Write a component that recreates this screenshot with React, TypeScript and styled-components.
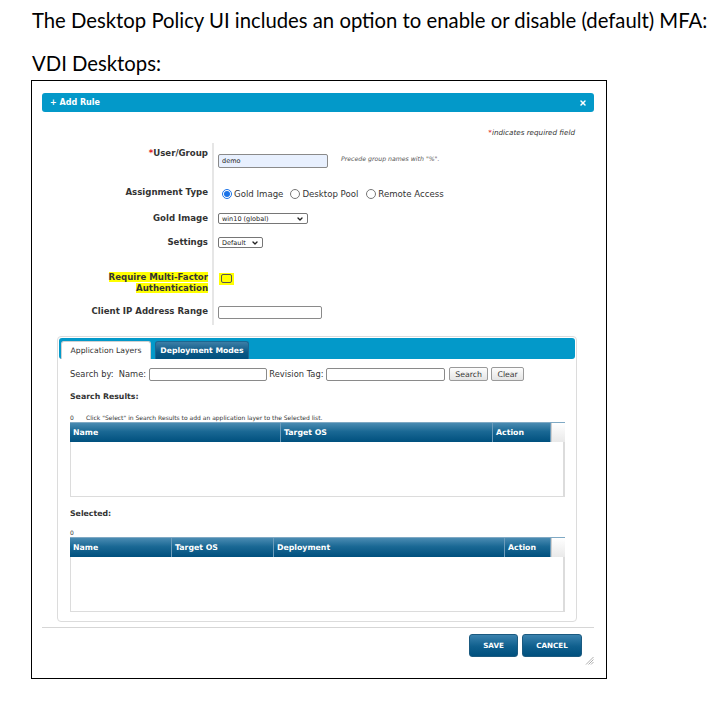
import React from "react";
import styled, { createGlobalStyle } from "styled-components";
import { ChevronDown, X } from "lucide-react";

const UI = `"DejaVu Sans", Verdana, sans-serif`;

const Global = createGlobalStyle`
  html, body { margin: 0; padding: 0; background: #fff; }
  body { width: 720px; height: 705px; overflow: hidden; }
  * { box-sizing: border-box; }
`;

const Page = styled.div`
  padding-top: 7px;
`;

const Intro = styled.p<{ $mt: number }>`
  margin: ${(p) => p.$mt}px 0 0 32px;
  font-family: Lato, "Open Sans", sans-serif;
  font-size: 20.3px;
  line-height: 26px;
  color: #000;
  white-space: nowrap;
`;

const Frame = styled.div`
  margin: 4px 0 0 31px;
  width: 576px;
  height: 599px;
  border: 1px solid #000;
  padding: 12px 12px 0 10px;
  display: flex;
  flex-direction: column;
  font-family: ${UI};
  color: #333;
`;

const TitleBar = styled.div`
  height: 19px;
  background: #0399c9;
  border-radius: 3px;
  padding: 0 7px 0 8px;
  display: flex;
  align-items: center;
  justify-content: space-between;
  color: #fff;
  font-weight: bold;
  font-size: 8px;
`;

const RequiredNote = styled.div`
  margin-top: 16px;
  padding-right: 19px;
  text-align: right;
  font-style: italic;
  font-size: 7.2px;
  line-height: 9px;
  color: #333;
`;

const Req = styled.span`
  color: #e02020;
`;

const Form = styled.div`
  margin-top: 6px;
  display: flex;
  flex-direction: column;
`;

const Row = styled.div<{ $h: number }>`
  display: grid;
  grid-template-columns: 170px 1fr;
  height: ${(p) => p.$h}px;
`;

const Label = styled.div<{ $top: number }>`
  padding: ${(p) => p.$top}px 4px 0 0;
  text-align: right;
  font-weight: bold;
  font-size: 8.6px;
  line-height: 11px;
  color: #333;
`;

const Highlight = styled.span`
  background: #ffff00;
  color: #333;
`;

const Field = styled.div<{ $top: number }>`
  border-left: 2px solid #e6e6e6;
  padding: ${(p) => p.$top}px 0 0 4px;
  display: flex;
  align-items: flex-start;
`;

const TextInput = styled.input<{ $w: number; $h: number; $fill?: boolean }>`
  width: ${(p) => p.$w}px;
  height: ${(p) => p.$h}px;
  border: 1px solid #8a8a8a;
  border-radius: 2px;
  background: ${(p) => (p.$fill ? "#e8f0fe" : "#fff")};
  font-family: ${UI};
  font-size: 6.5px;
  color: #222;
  padding: 0 3px;
  margin: 0;
  outline: none;
`;

const Hint = styled.span`
  margin: 1px 0 0 13px;
  font-style: italic;
  font-size: 6.2px;
  line-height: 8px;
  color: #555;
`;

const RadioGroup = styled.div`
  display: flex;
  align-items: center;
  height: 12px;
  font-size: 8.6px;
  color: #333;
`;

const Radio = styled.input<{ $ml: number }>`
  width: 10px;
  height: 10px;
  margin: 0 2px 0 ${(p) => p.$ml}px;
  accent-color: #1a73e8;
`;

const SelectBox = styled.div<{ $w: number }>`
  width: ${(p) => p.$w}px;
  height: 11px;
  border: 1px solid #767676;
  border-radius: 2px;
  padding: 0 3px 0 3px;
  display: flex;
  align-items: center;
  justify-content: space-between;
  font-size: 6.5px;
  color: #222;
  background: #fff;
`;

const CheckWrap = styled.span`
  display: inline-flex;
  margin-left: 1px;
  padding: 1px 2px 2px 2px;
  background: #ffff00;
`;

const CheckBox = styled.span`
  width: 11px;
  height: 9px;
  border: 1px solid #555;
  border-radius: 2px;
`;

const Panel = styled.div`
  margin: 11px 0 0 15px;
  width: 520px;
  height: 286px;
  border: 1px solid #dcdcdc;
  border-radius: 4px;
  padding: 1px;
  display: flex;
  flex-direction: column;
`;

const TabBar = styled.div`
  height: 21px;
  background: #0399c9;
  border-radius: 3px;
  padding: 0 0 0 2px;
  display: flex;
  align-items: flex-end;
  gap: 4px;
`;

const Tab = styled.div<{ $active?: boolean; $w: number }>`
  width: ${(p) => p.$w}px;
  height: 18px;
  border-radius: 3px 3px 0 0;
  display: flex;
  align-items: center;
  justify-content: center;
  font-size: 7.7px;
  font-weight: ${(p) => (p.$active ? "normal" : "bold")};
  color: ${(p) => (p.$active ? "#333" : "#fff")};
  background: ${(p) =>
    p.$active ? "#fff" : "linear-gradient(#3d7ea6, #0b5986 60%, #00507e)"};
  border: 1px solid ${(p) => (p.$active ? "#d0d0d0" : "#1d6690")};
  border-bottom: none;
`;

const Content = styled.div`
  padding: 0 0 0 11px;
  display: flex;
  flex-direction: column;
`;

const SearchRow = styled.div`
  margin-top: 8px;
  height: 14px;
  display: flex;
  align-items: center;
  font-size: 8.3px;
  color: #333;
  white-space: pre;
`;

const SmallButton = styled.div<{ $w: number; $ml: number }>`
  width: ${(p) => p.$w}px;
  height: 14px;
  margin-left: ${(p) => p.$ml}px;
  border: 1px solid #9a9a9a;
  border-radius: 2px;
  background: linear-gradient(#fdfdfd, #e4e4e4);
  display: flex;
  align-items: center;
  justify-content: center;
  font-size: 7.8px;
  color: #333;
`;

const SectionTitle = styled.div<{ $mt: number }>`
  margin-top: ${(p) => p.$mt}px;
  font-weight: bold;
  font-size: 7.8px;
  line-height: 11px;
  color: #333;
`;

const Note = styled.div<{ $mt: number }>`
  margin-top: ${(p) => p.$mt}px;
  font-size: 6px;
  line-height: 9px;
  color: #333;
  display: flex;
`;

const Count = styled.span`
  width: 16px;
`;

const Table = styled.div`
  width: 495px;
  display: flex;
  flex-direction: column;
`;

const HeaderRow = styled.div<{ $cols: string }>`
  display: grid;
  grid-template-columns: ${(p) => p.$cols};
  height: 20px;
  background: linear-gradient(#4a8bb2, #1a6894 45%, #00507e);
  border-top: 1px solid #7fa9c4;
`;

const HeadCell = styled.div`
  display: flex;
  align-items: center;
  padding-left: 3px;
  font-weight: bold;
  font-size: 7.8px;
  color: #fff;
  border-right: 1px solid #6c9cbb;
`;

const ScrollCell = styled.div`
  background: linear-gradient(#ffffff, #e9e9e9);
  border-left: 1px solid #d0d0d0;
`;

const TableBody = styled.div`
  height: 55px;
  border: 1px solid #dcdcdc;
  border-top: none;
  border-right-width: 2px;
`;

const Separator = styled.div`
  margin-top: 5px;
  height: 1px;
  background: #d6d6d6;
`;

const ButtonRow = styled.div`
  margin-top: 6px;
  display: flex;
  justify-content: flex-end;
  align-items: flex-start;
  gap: 4px;
`;

const ActionButton = styled.div<{ $w: number }>`
  width: ${(p) => p.$w}px;
  height: 23px;
  border: 1px solid #1b5a80;
  border-radius: 3px;
  background: linear-gradient(#3a82ae, #0f5f8d 55%, #00507e);
  display: flex;
  align-items: center;
  justify-content: center;
  font-weight: bold;
  font-size: 7.2px;
  color: #fff;
`;

const Grip = styled.svg`
  margin-top: 22px;
  margin-left: -1px;
`;

type Col = { name: string };

const DataTable = ({ cols, template }: { cols: Col[]; template: string }) => (
  <Table>
    <HeaderRow $cols={template}>
      {cols.map((c) => (
        <HeadCell key={c.name}>{c.name}</HeadCell>
      ))}
      <ScrollCell />
    </HeaderRow>
    <TableBody />
  </Table>
);

export default function App() {
  return (
    <Page>
      <Global />
      <Intro $mt={0}>
        The Desktop Policy UI includes an option to enable or disable (default) MFA:
      </Intro>
      <Intro $mt={17}>VDI Desktops:</Intro>
      <Frame>
        <TitleBar>
          <span>+ Add Rule</span>
          <X size={8} strokeWidth={4.5} color="#fff" />
        </TitleBar>
        <RequiredNote>
          <Req>*</Req>indicates required field
        </RequiredNote>
        <Form>
          <Row $h={36}>
            <Label $top={5}>
              <Req>*</Req>User/Group
            </Label>
            <Field $top={11}>
              <TextInput $w={110} $h={14} $fill readOnly value="demo" />
              <Hint>Precede group names with "%".</Hint>
            </Field>
          </Row>
          <Row $h={26}>
            <Label $top={7.5}>Assignment Type</Label>
            <Field $top={9}>
              <RadioGroup>
                <Radio type="radio" name="at" defaultChecked $ml={4} />
                Gold Image
                <Radio type="radio" name="at" $ml={7} />
                Desktop Pool
                <Radio type="radio" name="at" $ml={8} />
                Remote Access
              </RadioGroup>
            </Field>
          </Row>
          <Row $h={24}>
            <Label $top={7.5}>Gold Image</Label>
            <Field $top={8}>
              <SelectBox $w={90}>
                <span>win10 (global)</span>
                <ChevronDown size={8} strokeWidth={4} color="#222" />
              </SelectBox>
            </Field>
          </Row>
          <Row $h={28}>
            <Label $top={7.5}>Settings</Label>
            <Field $top={8}>
              <SelectBox $w={45}>
                <span>Default</span>
                <ChevronDown size={8} strokeWidth={4} color="#222" />
              </SelectBox>
            </Field>
          </Row>
          <Row $h={42}>
            <Label $top={14.5}>
              <Highlight>Require Multi-Factor</Highlight>
              <br />
              <Highlight>Authentication</Highlight>
            </Label>
            <Field $top={16}>
              <CheckWrap>
                <CheckBox />
              </CheckWrap>
            </Field>
          </Row>
          <Row $h={26}>
            <Label $top={6.5}>Client IP Address Range</Label>
            <Field $top={7}>
              <TextInput $w={104} $h={13} readOnly value="" />
            </Field>
          </Row>
        </Form>

        <Panel>
          <TabBar>
            <Tab $active $w={90}>
              Application Layers
            </Tab>
            <Tab $w={94}>Deployment Modes</Tab>
          </TabBar>
          <Content>
            <SearchRow>
              {"Search by:  Name: "}
              <TextInput $w={118} $h={13} readOnly value="" />
              {" Revision Tag: "}
              <TextInput $w={119} $h={13} readOnly value="" />
              <SmallButton $w={39} $ml={4}>
                Search
              </SmallButton>
              <SmallButton $w={33} $ml={3}>
                Clear
              </SmallButton>
            </SearchRow>
            <SectionTitle $mt={10}>Search Results:</SectionTitle>
            <Note $mt={11}>
              <Count>0</Count>
              Click "Select" in Search Results to add an application layer to the Selected list.
            </Note>
            <DataTable
              cols={[{ name: "Name" }, { name: "Target OS" }, { name: "Action" }]}
              template="211px 212px 58px 14px"
            />
            <SectionTitle $mt={11}>Selected:</SectionTitle>
            <Note $mt={9}>
              <Count>0</Count>
            </Note>
            <DataTable
              cols={[
                { name: "Name" },
                { name: "Target OS" },
                { name: "Deployment" },
                { name: "Action" },
              ]}
              template="102px 102px 231px 46px 14px"
            />
          </Content>
        </Panel>
        <Separator />
        <ButtonRow>
          <ActionButton $w={49}>SAVE</ActionButton>
          <ActionButton $w={60}>CANCEL</ActionButton>
          <Grip width="9" height="9" viewBox="0 0 9 9">
            <line x1="8.5" y1="1" x2="1" y2="8.5" stroke="#999" strokeWidth="0.8" />
            <line x1="8.5" y1="3.5" x2="3.5" y2="8.5" stroke="#999" strokeWidth="0.8" />
            <line x1="8.5" y1="6" x2="6" y2="8.5" stroke="#999" strokeWidth="0.8" />
          </Grip>
        </ButtonRow>
      </Frame>
    </Page>
  );
}
